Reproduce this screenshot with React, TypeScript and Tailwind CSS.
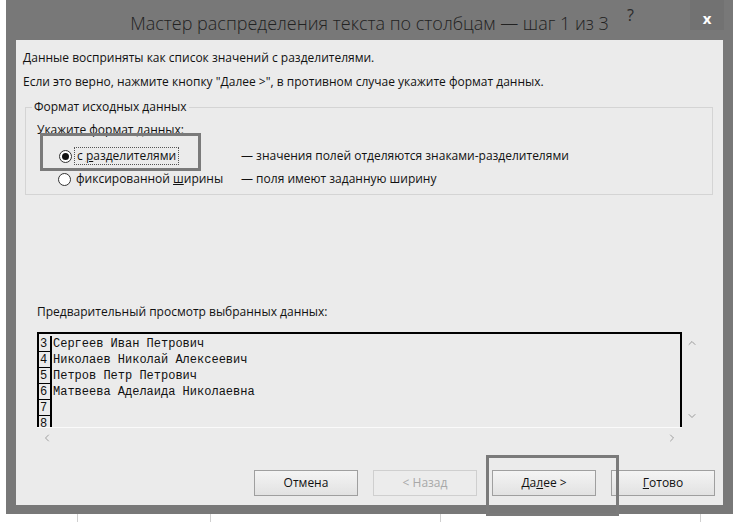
import { ChevronDown, ChevronLeft, ChevronRight, ChevronUp } from "lucide-react";

const ui = { fontFamily: '"Open Sans", "Noto Sans", sans-serif' };
const mono = { fontFamily: '"Liberation Mono", "DejaVu Sans Mono", monospace' };

const rows = [
  { n: "3", text: "Сергеев Иван Петрович" },
  { n: "4", text: "Николаев Николай Алексеевич" },
  { n: "5", text: "Петров Петр Петрович" },
  { n: "6", text: "Матвеева Аделаида Николаевна" },
  { n: "7", text: "" },
  { n: "8", text: "" },
];

function Radio({ checked }: { checked?: boolean }) {
  return (
    <span className="flex h-[13px] w-[13px] items-center justify-center rounded-full border border-[#333] bg-white">
      {checked ? <span className="h-[7px] w-[7px] rounded-full bg-[#111]" /> : null}
    </span>
  );
}

function Button({
  children,
  disabled,
}: {
  children: React.ReactNode;
  disabled?: boolean;
}) {
  return (
    <div
      className={
        disabled
          ? "flex h-[26px] w-[104px] items-center justify-center border border-[#cfcfcf] bg-[#ececec] text-[12px] text-[#a8a8a8]"
          : "flex h-[26px] w-[104px] items-center justify-center border border-[#9f9f9f] bg-gradient-to-b from-[#f4f4f4] to-[#e2e2e2] text-[12px] text-[#111]"
      }
    >
      {children}
    </div>
  );
}

export default function App() {
  return (
    <div className="relative h-[522px] w-[741px] overflow-hidden bg-white" style={ui}>
      {/* sheet grid peeking out behind the dialog */}
      <div className="absolute left-[77px] top-[514px] h-[8px] w-px bg-[#d0d0d0]" />
      <div className="absolute left-[210px] top-[514px] h-[8px] w-px bg-[#d0d0d0]" />
      <div className="absolute left-[440px] top-[514px] h-[8px] w-px bg-[#d0d0d0]" />
      <div className="absolute left-[700px] top-[514px] h-[8px] w-px bg-[#d0d0d0]" />

      {/* window */}
      <div className="relative ml-[6px] flex h-[514px] w-[727px] flex-col bg-[#787878]">
        {/* title bar */}
        <div className="flex h-[40px] items-center">
          <div className="flex-1 pl-[106px] pt-[6px] text-center text-[18px] font-light text-[#222]">
            Мастер распределения текста по столбцам — шаг 1 из 3
          </div>
          <div className="mb-[10px] w-[63px] text-[16px] text-[#2a2a2a]">?</div>
          <div className="mb-[10px] mr-[9px] flex h-[30px] w-[34px] items-center justify-center self-start bg-[#727272] pt-[6px] text-[15px] font-bold text-white">
            x
          </div>
        </div>

        {/* client area */}
        <div className="mx-[10px] flex h-[465px] flex-col bg-[#ebebeb] text-[12px] text-[#111]">
          <p className="ml-[7px] mt-[10px] leading-[16px]">
            Данные восприняты как список значений с разделителями.
          </p>
          <p className="ml-[7px] mt-[8px] leading-[16px]">
            Если это верно, нажмите кнопку "Далее &gt;", в противном случае укажите формат данных.
          </p>

          {/* group box */}
          <div className="relative ml-[9px] mt-[17px] h-[88px] w-[688px] border border-[#d4d4d4]">
            <span className="absolute left-[6px] top-[-9px] bg-[#ebebeb] px-[2px] leading-[16px]">
              Формат исходных данных
            </span>
            <div className="ml-[11px] mt-[14px] leading-[16px]">Укажите формат данных:</div>
            <div className="mt-[9px] flex items-center">
              <div className="ml-[33px] flex w-[182px] items-center">
                <Radio checked />
                <span className="ml-[2px] border border-dotted border-[#555] px-[2px] leading-[16px]">
                  с <u>р</u>азделителями
                </span>
              </div>
              <span className="leading-[16px]">— значения полей отделяются знаками-разделителями</span>
            </div>
            <div className="mt-[6px] flex items-center">
              <div className="ml-[32px] flex w-[183px] items-center">
                <Radio />
                <span className="ml-[5px] leading-[16px]">
                  фиксированной <u>ш</u>ирины
                </span>
              </div>
              <span className="leading-[16px]">— поля имеют заданную ширину</span>
            </div>
          </div>

          <p className="ml-[21px] mt-[109px] leading-[16px]">
            Предварительный просмотр выбранных данных:
          </p>

          {/* preview */}
          <div className="ml-[21px] mt-[12px] flex">
            <div className="h-[95px] w-[645px] overflow-hidden border-l-2 border-r-2 border-t-2 border-black pt-[2px]" style={mono}>
              {rows.map((r) => (
                <div key={r.n} className="flex h-[16px] text-[12px] leading-[16px] text-[#111]">
                  <span className="w-[13px] border-b border-r-2 border-black pl-[1px]">{r.n}</span>
                  <span className="pl-[1px] whitespace-pre">{r.text}</span>
                </div>
              ))}
            </div>
            <div className="flex h-[95px] w-[20px] flex-col items-center justify-between py-[5px] text-[#9a9a9a]">
              <ChevronUp size={12} strokeWidth={2} />
              <ChevronDown size={12} strokeWidth={2} />
            </div>
          </div>
          <div className="ml-[21px] flex h-[20px] w-[645px] items-center justify-between border-t border-[#fafafa] px-[4px] text-[#a0a0a0]">
            <ChevronLeft size={12} strokeWidth={2} />
            <ChevronRight size={12} strokeWidth={2} />
          </div>

          {/* buttons */}
          <div className="ml-[238px] mt-[23px] flex gap-[15px]">
            <Button>Отмена</Button>
            <Button disabled>&lt; Назад</Button>
            <Button>
              <span>
                Да<u>л</u>ее &gt;
              </span>
            </Button>
            <Button>
              <span>
                <u>Г</u>отово
              </span>
            </Button>
          </div>
        </div>
      </div>

      {/* annotation frames */}
      <div className="absolute left-[40px] top-[133px] h-[38px] w-[161px] border-[3px] border-[#7a7a7a]" />
      <div className="absolute left-[486px] top-[455px] h-[61px] w-[133px] border-[3px] border-[#7a7a7a]" />
    </div>
  );
}
